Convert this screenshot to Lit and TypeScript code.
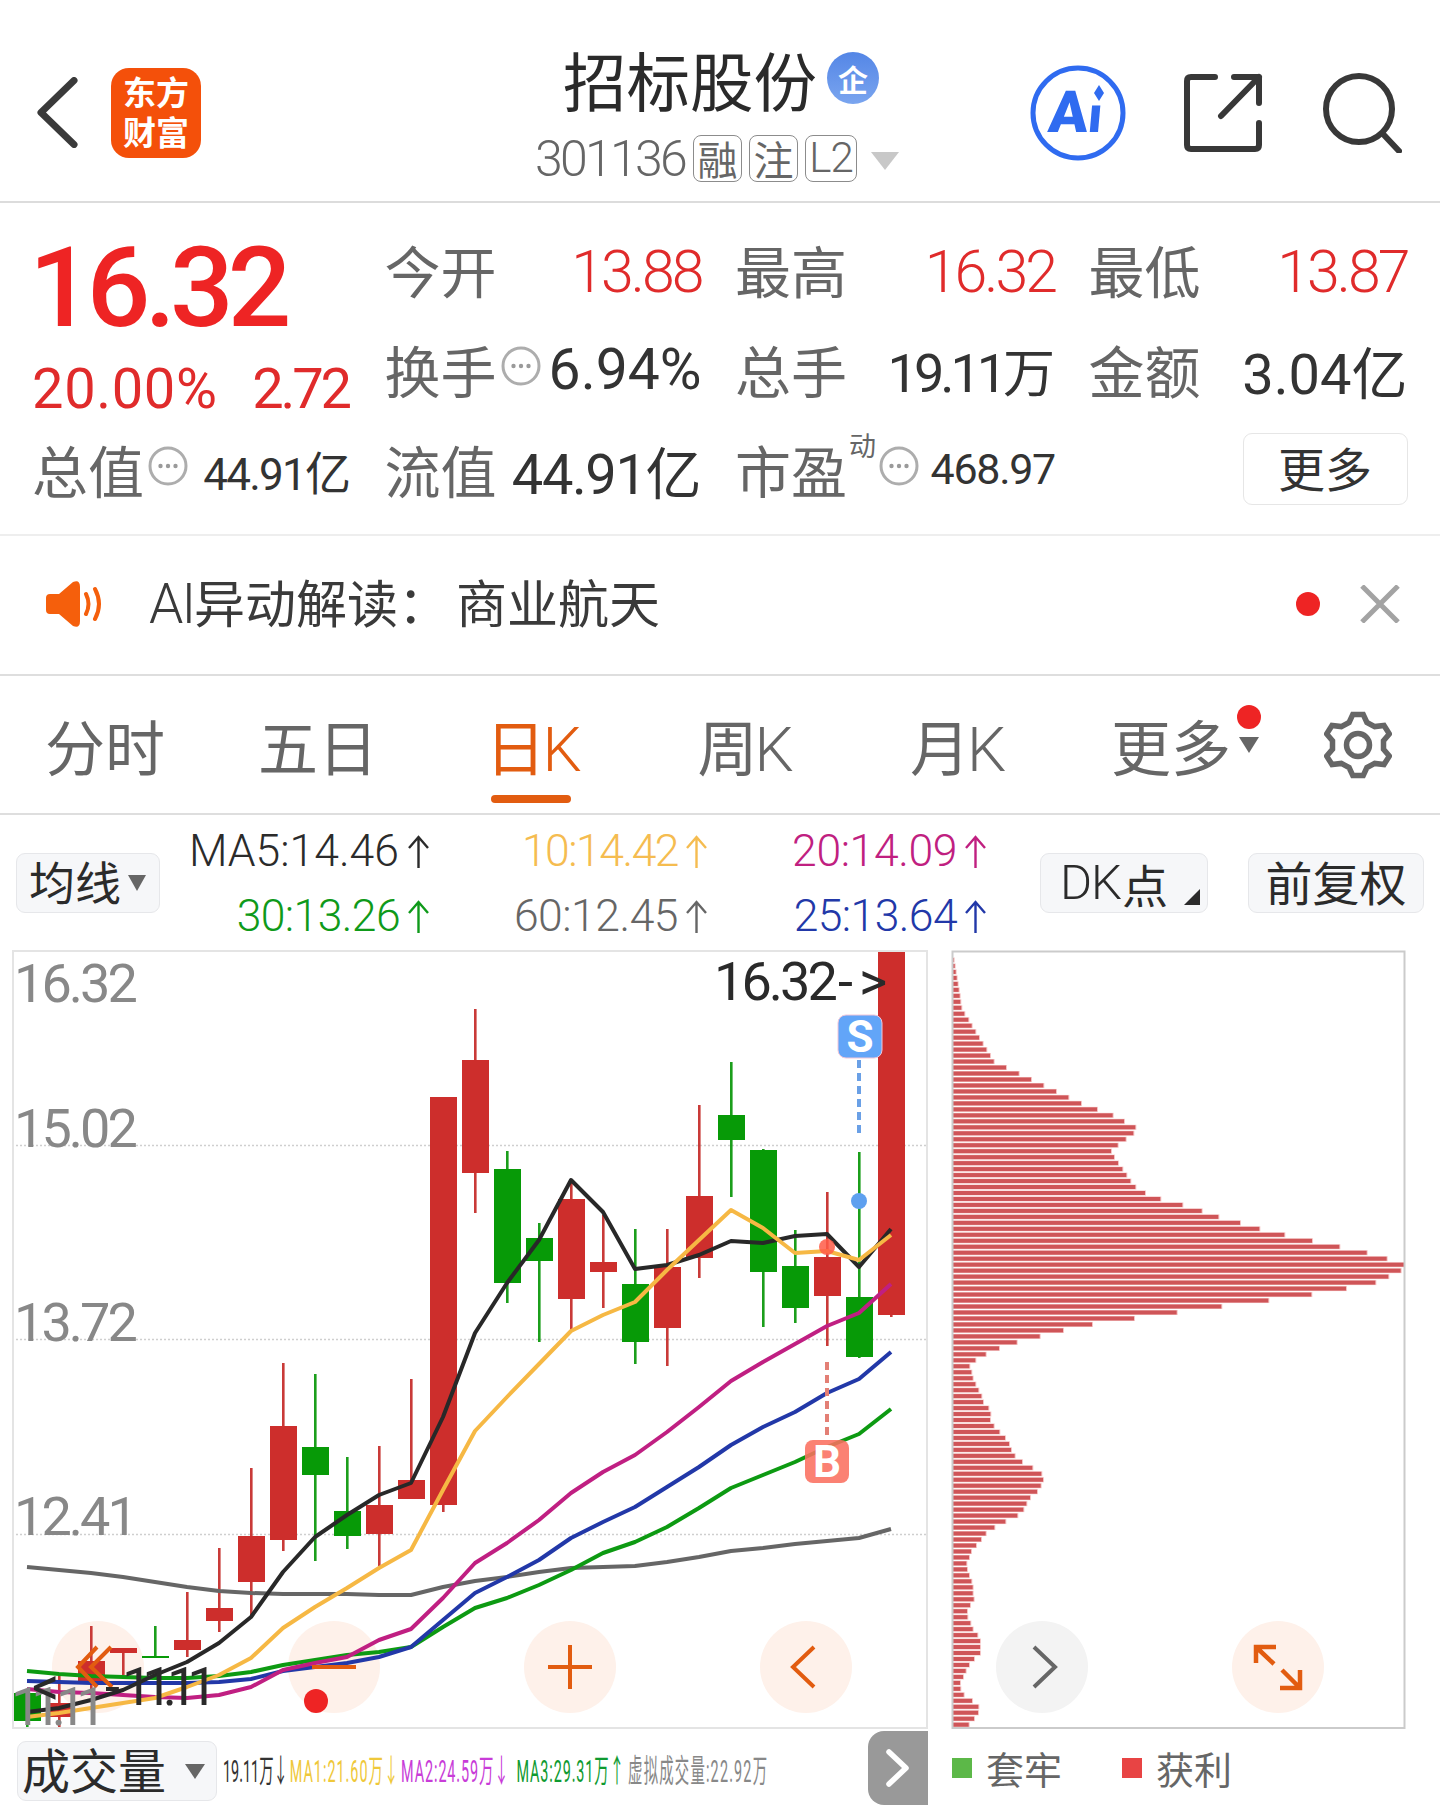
import { LitElement, html, css, svg } from "lit";
import { customElement } from "lit/decorators.js";

const CANDLES: [number, number, number, number, string][] = [
  [1693, 1693, 1721, 1728, "g"], [1673, 1703, 1717, 1727, "r"], [1626, 1661, 1683, 1690, "r"], [1648, 1648, 1653, 1675, "r"],
  [1626, 1656, 1658, 1658, "g"], [1592, 1640, 1650, 1657, "r"], [1548, 1608, 1621, 1632, "r"], [1468, 1536, 1582, 1617, "r"],
  [1363, 1426, 1540, 1551, "r"], [1374, 1447, 1475, 1561, "g"], [1457, 1511, 1536, 1549, "g"], [1446, 1505, 1534, 1566, "r"],
  [1379, 1480, 1499, 1499, "r"], [1097, 1097, 1505, 1512, "r"], [1009, 1060, 1173, 1213, "r"], [1151, 1169, 1283, 1303, "g"],
  [1223, 1238, 1261, 1342, "g"], [1183, 1199, 1299, 1330, "r"], [1215, 1262, 1272, 1308, "r"], [1229, 1284, 1342, 1364, "g"],
  [1229, 1267, 1328, 1366, "r"], [1105, 1196, 1258, 1278, "r"], [1062, 1115, 1140, 1197, "g"], [1149, 1150, 1272, 1327, "g"],
  [1230, 1266, 1308, 1323, "g"], [1192, 1257, 1296, 1346, "r"], [1152, 1297, 1357, 1358, "g"], [952, 952, 1315, 1317, "r"],
];

const LINES: [string, number, number[]][] = [
  ["#666666", 4, [1567,1570,1573,1577,1582,1587,1591,1593,1594,1594,1594,1595,1595,1587,1581,1577,1572,1568,1567,1566,1562,1557,1551,1548,1544,1541,1538,1529]],
  ["#0d9a12", 4, [1671,1674,1676,1677,1678,1678,1676,1672,1665,1660,1655,1652,1647,1627,1608,1598,1585,1570,1553,1542,1527,1508,1488,1475,1462,1447,1434,1409]],
  ["#2238a8", 4, [1681,1682,1683,1683,1683,1683,1682,1679,1671,1667,1663,1657,1647,1620,1593,1577,1560,1538,1522,1507,1487,1467,1445,1427,1412,1393,1379,1352]],
  ["#c01f82", 4, [1689,1692,1693,1695,1697,1698,1695,1687,1670,1663,1657,1640,1629,1598,1563,1543,1520,1493,1472,1455,1432,1407,1381,1362,1344,1326,1313,1284]],
  ["#282828", 4, [1712,1708,1700,1690,1675,1662,1643,1617,1572,1537,1515,1495,1483,1417,1333,1283,1240,1180,1212,1269,1265,1255,1241,1243,1236,1234,1267,1229]],
  ["#f6b844", 4, [1717,1713,1708,1703,1698,1687,1675,1658,1628,1607,1588,1568,1550,1490,1431,1397,1364,1331,1315,1302,1270,1240,1210,1228,1253,1251,1260,1235]],
];

const BAR_ENDS = [41,44,47,50,53,56,59,61,64,73,85,95,106,117,128,139,150,161,198,236,273,310,348,385,423,471,518,552,586,580,557,533,513,522,534,547,559,571,586,615,661,727,785,835,900,958,1033,1116,1198,1280,1340,1392,1382,1345,1306,1218,1114,985,844,710,582,456,369,299,230,177,137,106,88,94,98,106,115,124,129,145,151,150,161,178,195,207,213,224,246,277,304,309,302,291,270,259,250,232,196,163,137,123,108,93,87,79,81,87,94,98,98,101,90,81,82,91,98,112,120,120,120,102,87,77,69,60,61,71,96,115,114,102,86];

function gearPath(): string {
  const pts: string[] = [];
  for (let k = 0; k < 6; k++) {
    const a = k * 60 - 90;
    const seq: [number, number][] = [[31, -9], [31, 9], [24, 20], [24, 40]];
    for (const [r, d] of seq) {
      const t = ((a + d) * Math.PI) / 180;
      pts.push(`${(34 + Math.cos(t) * r * 1.08).toFixed(1)},${(34 + Math.sin(t) * r).toFixed(1)}`);
    }
  }
  return "M" + pts.join("L") + "Z";
}

const upArrow = (color: string) => html`<svg class="arr" viewBox="0 0 23 33" fill="none" stroke=${color} stroke-width="2.4"><path d="M11.5 33V2M2 13L11.5 2L21 13"/></svg>`;
const info = (after = false) => html`<svg class="info ${after ? "after" : ""}" viewBox="0 0 40 40"><circle cx="20" cy="20" r="18" fill="none" stroke="#adadad" stroke-width="3"/><circle cx="12.5" cy="20" r="2.2" fill="#9a9a9a"/><circle cx="20" cy="20" r="2.2" fill="#9a9a9a"/><circle cx="27.5" cy="20" r="2.2" fill="#9a9a9a"/></svg>`;

@customElement("app-root")
export class AppRoot extends LitElement {
  static styles = css`
    :host { display: block; width: 1440px; height: 1805px; overflow: hidden; background: #fff; color: #333;
      font-family: Roboto, "Noto Sans CJK SC", sans-serif; }
    * { box-sizing: border-box; }
    .num { letter-spacing: -0.055em; }
    .n0 { letter-spacing: 0; }
    .n3 { letter-spacing: -0.025em; }
    .n7 { letter-spacing: -0.075em; }
    .cjk { font-family: "Noto Sans CJK SC", sans-serif; letter-spacing: 0; }

    .hdr { height: 203px; border-bottom: 2px solid #dcdcdc; display: flex; padding-left: 37px; }
    .hleft { width: 498px; display: flex; align-items: center; gap: 33px; padding-top: 24px; }
    .back { width: 41px; height: 71px; }
    .logo { width: 90px; height: 90px; border-radius: 18px; background: #f4500a; color: #fff; font-weight: 700;
      font-family: "Noto Sans CJK SC", sans-serif; font-size: 33px; line-height: 40px; text-align: center; padding-top: 3px; }
    .hmid { width: 375px; padding-top: 38px; }
    .name { display: flex; align-items: center; gap: 10px; padding-left: 28px; height: 80px; }
    .name b { font: 400 63.5px/80px "Noto Sans CJK SC", sans-serif; color: #2a2a2a; }
    .qi { width: 52px; height: 52px; border-radius: 50%; background: linear-gradient(#5486e6, #7aa5ef); color: #fff; font: 700 30px/52px "Noto Sans CJK SC", sans-serif; text-align: center; }
    .sub { display: flex; align-items: center; height: 47px; margin-top: 17px; }
    .code { font-size: 50px; font-weight: 300; color: #666; width: 158px; }
    .tag { height: 47px; border: 1.5px solid #8c8c8c; border-radius: 8px; margin-right: 7px; color: #666; font: 400 40px/44px "Noto Sans CJK SC", sans-serif; text-align: center; width: 49px; flex: none; }
    .tag.l { font: 300 42px/44px Roboto, sans-serif; width: 52px; letter-spacing: -1px; }
    .tri { width: 0; height: 0; border-style: solid; border-color: #c8c8c8 transparent transparent; border-width: 18px 14px 0; margin-left: 7px; margin-top: 4px; }
    .hright { display: flex; align-items: center; padding-left: 120px; padding-top: 24px; }
    .hright svg { display: block; flex: none; }
    .ait { font: 900 58px Roboto, sans-serif; fill: #2f6bf0; }
    .ait2 { font-size: 50px; }
    .mr { margin-right: 58px; }

    .stats { height: 333px; border-bottom: 2px solid #eeeeee; padding: 16px 0 0 34px; display: grid;
      grid-template-columns: 315px 313px 316px 315px; grid-auto-rows: 100px; column-gap: 37.5px; }
    .big { grid-row: 1 / span 2; padding-top: 2px; }
    .price { font-size: 112px; line-height: 100px; margin-top: 17px; font-weight: 500; color: #ee2424; margin-left: -5px; letter-spacing: -0.052em; }
    .chg { display: flex; justify-content: space-between; font-size: 56px; line-height: 60px; margin: 21px 0 0 -2px; color: #e02b2b; font-weight: 400; }
    .chg .n0 { letter-spacing: 0.012em; }
    .cell { display: flex; align-items: center; }
    .lab { font: 400 56px/1 "Noto Sans CJK SC", sans-serif; color: #666; margin-left: -2px; }
    .val { margin-left: auto; margin-right: -2px; font-size: 54px; font-weight: 400; color: #333; white-space: nowrap; }
    .val .cjk { font-size: 52px; }
    .val.w { font-size: 56px; }
    .val.w .cjk { font-size: 56px; }
    .val.p { font-size: 57px; }
    .val.red { color: #e02b2b; font-size: 59px; margin: 4px -2px 0 auto; font-weight: 300; letter-spacing: -0.05em; }
    .val.sm { font-size: 44px; letter-spacing: -0.04em; margin-top: 1px; }
    .val.sm .cjk { font-size: 46px; }
    .val.xs { font-size: 43px; letter-spacing: -0.03em; }
    .info { width: 40px; height: 40px; margin: -6px 0 0 4px; flex: none; }
    .sup { font: 400 27px/1 "Noto Sans CJK SC", sans-serif; color: #666; margin: -50px 0 0 2px; }
    .info.after { margin-left: 3px; }
    .more { margin-left: auto; margin-right: -2px; width: 165px; height: 72px; border: 1.5px solid #e6e6e6; border-radius: 9px; font: 400 47px/66px "Noto Sans CJK SC", sans-serif; text-align: center; color: #333; }

    .note { height: 140px; border-bottom: 2px solid #dedede; display: flex; align-items: center; padding: 0 40px 2px 45px; }
    .note .txt { margin-left: 46px; font: 400 51px/1 "Noto Sans CJK SC", sans-serif; color: #3a3a3a; flex: 1; white-space: pre; }
    .txt i { font: 300 55px/1 Roboto, sans-serif; letter-spacing: -2px; }
    .txt u { text-decoration: none; margin-right: 7px; }
    .dot { width: 24px; height: 24px; border-radius: 50%; background: #ee2424; margin-right: 40px; }

    .tabs { height: 139px; border-bottom: 2px solid #dedede; display: flex; padding-left: 45px; position: relative; }
    .tab { font: 400 60px/1 "Noto Sans CJK SC", sans-serif; color: #666; padding-top: 39px; position: relative; white-space: nowrap; }
    .tab i { font: 300 62px/1 Roboto, sans-serif; margin-left: -3px; }
    .tab.on { color: #e25c10; }
    .tab.on::after { content: ""; position: absolute; left: 5.5px; top: 119px; width: 80px; height: 8px; border-radius: 4px; background: #e25c10; }
    .w1 { width: 213px; } .w2 { width: 227.5px; } .w3 { width: 212px; } .w4 { width: 212.5px; } .w5 { width: 201px; } .w6 { width: 213px; }
    .rdot { position: absolute; left: 126px; top: 29px; width: 24px; height: 24px; border-radius: 50%; background: #ee2424; }
    .mtri { position: absolute; left: 128px; top: 61px; width: 0; height: 0; border-style: solid; border-color: #666 transparent transparent; border-width: 16px 10px 0; }
    .gear { width: 68px; height: 68px; margin-top: 35px; }

    .ma { height: 135px; display: flex; align-items: center; position: relative; padding-left: 16px; }
    .btn { height: 60px; background: #f6f7f9; border: 1.5px solid #e6e7ea; border-radius: 9px; display: flex; align-items: center; color: #2b2b2b;
      font: 400 46px/1 "Noto Sans CJK SC", sans-serif; flex: none; position: relative; }
    .btn i { font: 300 49px/1 Roboto, sans-serif; letter-spacing: -1px; margin-right: 1px; }
    .b1 { width: 144px; padding: 0 0 5px 12px; }
    .b1 .t { width: 0; height: 0; border-style: solid; border-color: #666 transparent transparent; border-width: 16px 9.5px 0; margin: 5px 0 0 7px; }
    .magrid { display: grid; grid-template-columns: 270px 278px 279px; grid-auto-rows: 65px; margin-top: 2px; }
    .mi { display: flex; align-items: center; justify-content: flex-end; gap: 7px; font-size: 44.5px; font-weight: 300; white-space: nowrap; }
    .mi.c1 { color: #2b2b2b; letter-spacing: 0; gap: 8px; }
    .mi.c2 { color: #f5bc50; letter-spacing: -1.5px; }
    .mi.c3 { color: #c02080; letter-spacing: -0.4px; }
    .mi.c4 { color: #0f9a1a; letter-spacing: -0.6px; }
    .mi.c5 { color: #666; letter-spacing: -0.5px; }
    .mi.c6 { color: #2238a8; letter-spacing: -0.6px; }
    .arr { width: 23px; height: 33px; flex: none; }
    .b2 { width: 168px; margin-left: 53px; padding-left: 19px; }
    .b2 .corner { position: absolute; right: 7px; bottom: 7px; width: 0; height: 0; border-style: solid; border-width: 0 0 16px 16px; border-color: transparent transparent #2b2b2b; }
    .b3 { width: 176px; margin-left: 40px; justify-content: center; font-size: 47px; padding-bottom: 4px; }

    .charts { display: flex; height: 780px; }
    .charts svg { display: block; flex: none; overflow: visible; }
    .cv { margin-left: 12px; }
    .dp { margin-left: 24px; }
    .t54 { font: 300 54px Roboto, sans-serif; letter-spacing: -0.055em; }
    .t54.g { fill: #888; font-weight: 400; }
    .t54.k { fill: #2a2a2a; font-weight: 400; }
    .t54.n1 { letter-spacing: -10px; }
    .bd { font: 700 44px Roboto, sans-serif; fill: #fff; }

    .vol { height: 75px; display: flex; position: relative; padding: 11px 0 0 17px; }
    .b4 { width: 200px; height: 60px; font-size: 48px; padding: 0 0 7px 4px; letter-spacing: 0; }
    .b4 .t { width: 0; height: 0; border-style: solid; border-color: #666 transparent transparent; border-width: 15px 10px 0; margin: 7px 0 0 19px; }
    .vwrap { width: 545px; margin-left: 6px; height: 60px; }
    .vs { display: flex; gap: 15px; transform: scaleX(0.45); transform-origin: left center; width: 1211px; font-size: 32px; line-height: 60px; white-space: nowrap; font-weight: 400; }
    .v1 { color: #333; margin-right: -11px; }
    .v2 { color: #efc83a; letter-spacing: 2.2px; margin-right: -11px; }
    .v3 { color: #c83cd8; letter-spacing: 2px; }
    .v4 { color: #0f9a30; letter-spacing: 2px; margin-right: -8px; }
    .v5 { color: #888; letter-spacing: 2.6px; }
    .tabx { position: absolute; left: 868px; top: 1px; width: 60px; height: 74px; background: #999; border-radius: 16px 0 0 16px; display: flex; align-items: center; justify-content: center; }
    .tabx svg { width: 26px; height: 40px; }
    .leg { position: absolute; left: 952px; top: 0; height: 75px; display: flex; align-items: center; color: #666; font: 400 38px/1 "Noto Sans CJK SC", sans-serif; }
    .leg s { display: block; width: 20px; height: 20px; margin-right: 14px; }
    .leg span { width: 136px; }
    .sg { background: #5cb848; } .sr { background: #e84444; }
  `;

  render() {
    const cs = CANDLES.map((c, i) => {
      const x = 27.5 + 32 * i;
      const col = c[4] === "r" ? "#cd2e2c" : "#079a07";
      const wc = c[4] === "r" ? "#c93a38" : "#1b9e1b";
      return svg`<rect x=${x - 1.5} y=${c[0]} width="2.6" height=${c[3] - c[0]} fill=${wc}/><rect x=${x - 13.5} y=${c[1]} width="27" height=${Math.max(c[2] - c[1], 2)} fill=${col}/>`;
    });
    const ls = LINES.map(([col, w, ys]) => svg`<polyline points=${ys.map((y, i) => `${27 + 32 * i},${y}`).join(" ")} fill="none" stroke=${col} stroke-width=${w} stroke-linejoin="round"/>`);
    const bars = BAR_ENDS.map((v, i) => {
      const y = 960 + (i * 764.7) / (BAR_ENDS.length - 1);
      const w = (v - 36) / 3;
      return svg`<rect x="952" y=${y - 2.5} width=${w + 1} height="5" fill="#f5c4c4"/><rect x="952" y=${y - 2} width=${w} height="4" fill="#cf5558"/>`;
    });
    return html`
      <div class="hdr">
        <div class="hleft">
          <svg class="back" viewBox="0 0 41 71" fill="none" stroke="#3a3a3a" stroke-width="7" stroke-linecap="round" stroke-linejoin="round"><path d="M37 3.5L4 35.5L37 67.5"/></svg>
          <div class="logo">东方<br/>财富</div>
        </div>
        <div class="hmid">
          <div class="name"><b>招标股份</b><div class="qi">企</div></div>
          <div class="sub"><span class="code num">301136</span><span class="tag">融</span><span class="tag">注</span><span class="tag l">L2</span><span class="tri"></span></div>
        </div>
        <div class="hright">
          <svg class="mr" width="96" height="96" viewBox="0 0 96 96">
            <circle cx="48" cy="48" r="45" fill="#fff" stroke="#2f6bf0" stroke-width="5"/>
            <text class="ait" x="17" y="67" transform="skewX(-5) translate(6 0)">A<tspan class="ait2">ı</tspan></text>
            <path d="M69 20L74 28L69 36L64 28Z" fill="#2f6bf0"/>
          </svg>
          <svg class="mr" width="80" height="80" viewBox="0 0 80 80" fill="none" stroke="#383838" stroke-width="6" stroke-linecap="round" stroke-linejoin="round">
            <path d="M31 4H7Q3 4 3 8V72Q3 76 7 76H71Q75 76 75 72V50"/>
            <path d="M37 43L75 4M50 4H75V30"/>
          </svg>
          <svg width="80" height="80" viewBox="0 0 80 80" fill="none" stroke="#383838" stroke-width="6" stroke-linecap="round">
            <circle cx="37" cy="36" r="33"/><path d="M61 61L77 78"/>
          </svg>
        </div>
      </div>

      <div class="stats">
        <div class="big">
          <div class="price">16.32</div>
          <div class="chg"><span class="n0">20.00%</span><span class="num">2.72</span></div>
        </div>
        <div class="cell"><span class="lab">今开</span><span class="val red">13.88</span></div>
        <div class="cell"><span class="lab">最高</span><span class="val red">16.32</span></div>
        <div class="cell"><span class="lab">最低</span><span class="val red">13.87</span></div>
        <div class="cell"><span class="lab">换手</span>${info()}<span class="val p n0">6.94%</span></div>
        <div class="cell"><span class="lab">总手</span><span class="val n7">19.11<span class="cjk">万</span></span></div>
        <div class="cell"><span class="lab">金额</span><span class="val w n0">3.04<span class="cjk">亿</span></span></div>
        <div class="cell"><span class="lab">总值</span>${info()}<span class="val sm">44.91<span class="cjk">亿</span></span></div>
        <div class="cell"><span class="lab">流值</span><span class="val w n3">44.91<span class="cjk">亿</span></span></div>
        <div class="cell"><span class="lab">市盈</span><span class="sup">动</span>${info(true)}<span class="val xs">468.97</span></div>
        <div class="cell"><span class="more">更多</span></div>
      </div>

      <div class="note">
        <svg width="58" height="46" viewBox="0 0 58 46" fill="#f55f0c">
          <path d="M1 17Q1 13 5 13H14L28 1Q35 -2 35 6V40Q35 48 28 45L14 33H5Q1 33 1 29Z"/>
          <path d="M41 13Q46 23 41 33M50 8Q58 23 50 38" fill="none" stroke="#f55f0c" stroke-width="4" stroke-linecap="round"/>
        </svg>
        <span class="txt"><i>AI</i>异动解读<u>：</u>商业航天</span>
        <span class="dot"></span>
        <svg width="40" height="38" viewBox="0 0 40 38" fill="none" stroke="#a3a3a3" stroke-width="5"><path d="M2 1L38 37M38 1L2 37"/></svg>
      </div>

      <div class="tabs">
        <span class="tab w1">分时</span>
        <span class="tab w2">五日</span>
        <span class="tab w3 on">日<i>K</i></span>
        <span class="tab w4">周<i>K</i></span>
        <span class="tab w5">月<i>K</i></span>
        <span class="tab w6">更多<span class="rdot"></span><span class="mtri"></span></span>
        <svg class="gear" viewBox="0 0 68 68" fill="none" stroke="#666" stroke-width="5.5" stroke-linejoin="miter"><path d=${gearPath()}/><circle cx="34" cy="34" r="11.5"/></svg>
      </div>

      <div class="ma">
        <div class="btn b1">均线<span class="t"></span></div>
        <div class="magrid">
          <div class="mi c1">MA5:14.46${upArrow("#2b2b2b")}</div>
          <div class="mi c2">10:14.42${upArrow("#f5bc50")}</div>
          <div class="mi c3">20:14.09${upArrow("#c02080")}</div>
          <div class="mi c4">30:13.26${upArrow("#0f9a1a")}</div>
          <div class="mi c5">60:12.45${upArrow("#666")}</div>
          <div class="mi c6">25:13.64${upArrow("#2238a8")}</div>
        </div>
        <div class="btn b2"><i>DK</i>点<span class="corner"></span></div>
        <div class="btn b3">前复权</div>
      </div>

      <div class="charts">
        <svg class="cv" width="916" height="780" viewBox="12 950 916 780">
          <g stroke="#cfcfcf" stroke-width="1.5" stroke-dasharray="2 2"><path d="M12 1145.5H927M12 1339.5H927M12 1534.5H927"/></g>
          <g fill="#fef1ea"><circle cx="98" cy="1667" r="46"/><circle cx="334" cy="1667" r="46"/><circle cx="570" cy="1667" r="46"/><circle cx="806" cy="1667" r="46"/></g>
          ${cs}${ls}
          <rect x="13" y="951" width="914" height="777" fill="none" stroke="#e4e4e4" stroke-width="2"/>
          <text class="t54 g" x="14" y="1002">16.32</text>
          <text class="t54 g" x="14" y="1147">15.02</text>
          <text class="t54 g" x="14" y="1341">13.72</text>
          <text class="t54 g" x="14" y="1535">12.41</text>
          <text class="t54 k" x="714" y="1000">16.32<tspan x="838">-</tspan><tspan x="859">&gt;</tspan></text>
          <g stroke-dasharray="8 5" stroke-width="4" fill="none"><path d="M859 1060V1137" stroke="#6aa0e6"/><path d="M827 1362V1439" stroke="#e37f75"/></g>
          <circle cx="859" cy="1201" r="8" fill="#5ea0ef"/>
          <circle cx="827" cy="1247" r="8" fill="#ff5a46" fill-opacity="0.85"/>
          <rect x="838" y="1015" width="44" height="43" rx="8" fill="#62a5f8" stroke="#f2c6d8" stroke-width="1"/>
          <text class="bd" x="860" y="1052" text-anchor="middle">S</text>
          <rect x="805" y="1440" width="44" height="43" rx="8" fill="#fb6f60" fill-opacity="0.88"/>
          <text class="bd" x="827" y="1477" text-anchor="middle">B</text>
          <g fill="none" stroke="#e25c10" stroke-width="4">
            <path d="M97 1647L78 1667L97 1687M111 1647L91 1667L112 1687"/>
            <path d="M312 1667H356"/>
            <path d="M548 1667H592M570 1645V1689"/>
            <path d="M814 1647L793 1667L814 1687"/>
          </g>
          <circle cx="316" cy="1701" r="12" fill="#ee2424"/>
          <text class="t54 g n1" x="11" y="1725">11.11</text>
          <text class="t54 k" x="32" y="1705">&lt;<tspan class="t54 k" x="105">-</tspan><tspan class="t54 k n1" x="122">11.11</tspan></text>
        </svg>
        <svg class="dp" width="454" height="780" viewBox="952 950 454 780">
          ${bars}
          <rect x="952.5" y="951.5" width="452" height="776.5" fill="none" stroke="#cbcbcb" stroke-width="2"/>
          <circle cx="1042" cy="1667" r="46" fill="#f3f3f3"/>
          <path d="M1034 1647L1055 1667L1034 1687" fill="none" stroke="#666" stroke-width="4"/>
          <circle cx="1278" cy="1667" r="46" fill="#fef1ea"/>
          <g fill="none" stroke="#e25c10" stroke-width="4.5"><path d="M1256 1663V1647H1276M1256 1647L1274 1664M1300 1670V1688H1280M1300 1688L1282 1670"/></g>
        </svg>
      </div>

      <div class="vol">
        <div class="btn b4">成交量<span class="t"></span></div>
        <div class="vwrap"><div class="vs">
          <span class="v1">19.11万↓</span>
          <span class="v2">MA1:21.60万↓</span>
          <span class="v3">MA2:24.59万↓</span>
          <span class="v4">MA3:29.31万↑</span>
          <span class="v5">虚拟成交量:22.92万</span>
        </div></div>
        <div class="tabx"><svg viewBox="0 0 26 40" fill="none" stroke="#fff" stroke-width="5.5" stroke-linecap="round" stroke-linejoin="round"><path d="M4 4L21 20L4 36"/></svg></div>
        <div class="leg"><s class="sg"></s><span>套牢</span><s class="sr"></s><span>获利</span></div>
      </div>
    `;
  }
}
